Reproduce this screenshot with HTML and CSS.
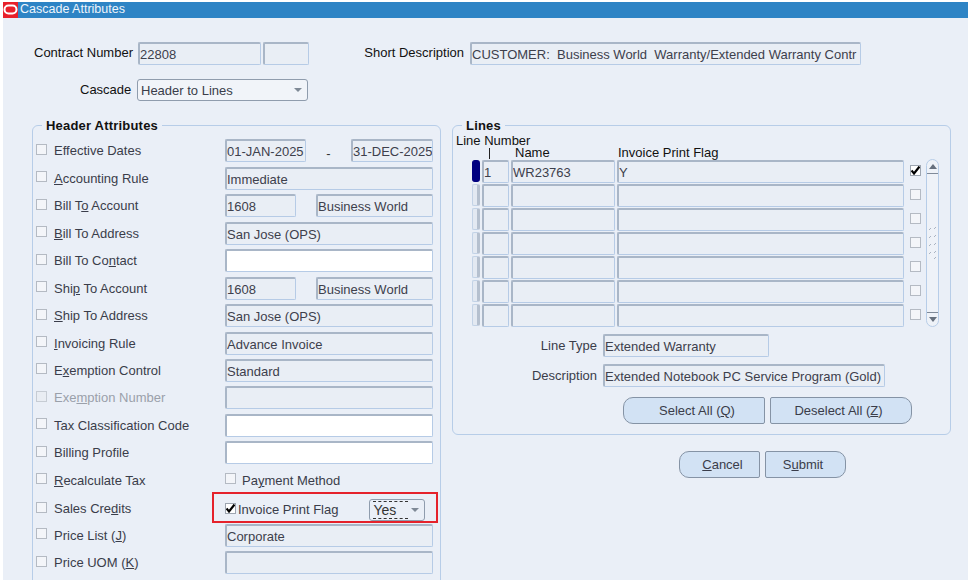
FILE: index.html
```html
<!DOCTYPE html>
<html lang="en">
<head>
<meta charset="utf-8">
<title>Cascade Attributes</title>
<link rel="stylesheet" href="styles.css">
</head>
<body>
<div class="window">
  <header class="titlebar">
    <span class="app-icon"><svg width="15" height="16" viewBox="0 0 15 16"><rect x="1.5" y="3.5" width="12" height="8" rx="4" fill="none" stroke="#fff" stroke-width="2"/></svg></span>
    <span class="title">Cascade Attributes</span>
  </header>
  <main class="content">
    <div class="top-row">
      <label class="top-label label-contract">Contract Number</label>
      <div class="field w-123">22808</div>
      <div class="field w-46"></div>
      <label class="top-label label-short">Short Description</label>
      <div class="field w-391">CUSTOMER:&nbsp; Business World&nbsp; Warranty/Extended Warranty Contr</div>
    </div>
    <div class="cascade-row">
      <label class="top-label label-cascade">Cascade</label>
      <div class="select w-171"><span>Header to Lines</span><i class="caret"></i></div>
    </div>
    <div class="panels">
      <fieldset class="group group-left">
        <legend>Header Attributes</legend>
        <div class="attr-row"><span class="cb"></span><span class="attr-label">Effective Dates</span><div class="pair"><div class="field w-81">01-JAN-2025</div><span class="dash">-</span><div class="field w-82">31-DEC-2025</div></div></div>
        <div class="attr-row"><span class="cb"></span><span class="attr-label"><u>A</u>ccounting Rule</span><div class="field">Immediate</div></div>
        <div class="attr-row"><span class="cb"></span><span class="attr-label">Bill T<u>o</u> Account</span><div class="pair"><div class="field w-71">1608</div><div class="field w-117">Business World</div></div></div>
        <div class="attr-row"><span class="cb"></span><span class="attr-label"><u>B</u>ill To Address</span><div class="field">San Jose (OPS)</div></div>
        <div class="attr-row"><span class="cb"></span><span class="attr-label">Bill To Co<u>n</u>tact</span><div class="field white"></div></div>
        <div class="attr-row"><span class="cb"></span><span class="attr-label">Shi<u>p</u> To Account</span><div class="pair"><div class="field w-71">1608</div><div class="field w-117">Business World</div></div></div>
        <div class="attr-row"><span class="cb"></span><span class="attr-label"><u>S</u>hip To Address</span><div class="field">San Jose (OPS)</div></div>
        <div class="attr-row"><span class="cb"></span><span class="attr-label"><u>I</u>nvoicing Rule</span><div class="field">Advance Invoice</div></div>
        <div class="attr-row"><span class="cb"></span><span class="attr-label">E<u>x</u>emption Control</span><div class="field">Standard</div></div>
        <div class="attr-row"><span class="cb disabled"></span><span class="attr-label muted">Exe<u>m</u>ption Number</span><div class="field"></div></div>
        <div class="attr-row"><span class="cb"></span><span class="attr-label">Tax Classification Code</span><div class="field white"></div></div>
        <div class="attr-row"><span class="cb"></span><span class="attr-label">Billing Profile</span><div class="field white"></div></div>
        <div class="attr-row"><span class="cb"></span><span class="attr-label"><u>R</u>ecalculate Tax</span><div class="inline-check"><span class="cb"></span><span class="attr-label">Pa<u>y</u>ment Method</span></div></div>
        <div class="attr-row"><span class="cb"></span><span class="attr-label">Sales Cre<u>d</u>its</span>
          <div class="highlight"><span class="cb checked"><svg width="11" height="11" viewBox="0 0 11 11"><path d="M1.5 5.5 L4 8.5 L9.5 1.5" fill="none" stroke="#000" stroke-width="2.2"/></svg></span><span class="flag-label">Invoice Print Flag</span><div class="select w-56"><span class="focus">Yes</span><i class="caret"></i></div></div>
        </div>
        <div class="attr-row"><span class="cb"></span><span class="attr-label">Price List (<u>J</u>)</span><div class="field">Corporate</div></div>
        <div class="attr-row"><span class="cb"></span><span class="attr-label">Price UOM (<u>K</u>)</span><div class="field"></div></div>
      </fieldset>
      <div class="right-col">
        <fieldset class="group group-right">
          <legend>Lines</legend>
          <div class="col-heads">
            <div class="head-number">Line Number<span class="tick"></span></div>
            <div class="head-name">Name</div>
            <div class="head-flag">Invoice Print Flag</div>
          </div>
          <div class="table">
            <div class="rows">
              <div class="line"><span class="sel current"></span><div class="field c-num">1</div><div class="field c-name">WR23763</div><div class="field c-flag">Y</div><span class="cb line-cb checked"><svg width="11" height="11" viewBox="0 0 11 11"><path d="M1.5 5.5 L4 8.5 L9.5 1.5" fill="none" stroke="#000" stroke-width="2.2"/></svg></span></div>
              <div class="line"><span class="sel"></span><div class="field c-num"></div><div class="field c-name"></div><div class="field c-flag"></div><span class="cb line-cb"></span></div>
              <div class="line"><span class="sel"></span><div class="field c-num"></div><div class="field c-name"></div><div class="field c-flag"></div><span class="cb line-cb"></span></div>
              <div class="line"><span class="sel"></span><div class="field c-num"></div><div class="field c-name"></div><div class="field c-flag"></div><span class="cb line-cb"></span></div>
              <div class="line"><span class="sel"></span><div class="field c-num"></div><div class="field c-name"></div><div class="field c-flag"></div><span class="cb line-cb"></span></div>
              <div class="line"><span class="sel"></span><div class="field c-num"></div><div class="field c-name"></div><div class="field c-flag"></div><span class="cb line-cb"></span></div>
              <div class="line"><span class="sel"></span><div class="field c-num"></div><div class="field c-name"></div><div class="field c-flag"></div><span class="cb line-cb"></span></div>
            </div>
            <div class="scrollbar">
              <div class="sb-end sb-up"><i class="arrow-up"></i></div>
              <div class="sb-track"><svg width="9" height="34" viewBox="0 0 9 34"><path d="M1 4l2-2M6 3l2-2M1 12l2-2M6 11l2-2M1 20l2-2M6 19l2-2M1 28l2-2M6 27l2-2M6 33l2-2" stroke="#a9b3c2" stroke-width="1" fill="none"/></svg></div>
              <div class="sb-end sb-down"><i class="arrow-down"></i></div>
            </div>
          </div>
          <div class="detail-row first"><label class="detail-label">Line Type</label><div class="field w-166">Extended Warranty</div></div>
          <div class="detail-row"><label class="detail-label">Description</label><div class="field w-282">Extended Notebook PC Service Program (Gold)</div></div>
          <div class="line-buttons">
            <button class="btn w-142" type="button">Select All (<u>Q</u>)</button>
            <button class="btn w-142" type="button">Deselect All (<u>Z</u>)</button>
          </div>
        </fieldset>
        <div class="main-buttons">
          <button class="btn w-81" type="button"><u>C</u>ancel</button>
          <button class="btn w-81" type="button">S<u>u</u>bmit</button>
        </div>
      </div>
    </div>
  </main>
</div>
</body>
</html>
```
FILE: styles.css
```css
* { box-sizing: border-box; }
html, body { margin: 0; height: 100%; overflow: hidden; background: #fff; }
body { font-family: "Liberation Sans", Arial, sans-serif; font-size: 13px; color: #3a3d4a; }
.window { margin: 2px 0 0 3px; height: 578px; background: #eaeff7; display: flex; flex-direction: column; overflow: hidden; }
.titlebar { height: 16px; background: #2e84c5; display: flex; align-items: center; flex: none; }
.app-icon { width: 15px; height: 16px; background: #e8202a; display: block; flex: none; }
.app-icon svg { display: block; }
.title { color: #eef5fb; font-size: 12.5px; margin: -2px 0 0 2px; line-height: 16px; }
.content { padding: 24px 0 0 29px; }
.top-row { display: flex; align-items: flex-start; height: 37px; }
.cascade-row { display: flex; height: 39px; }
.top-label { color: #111; height: 21px; line-height: 21px; white-space: nowrap; }
.label-contract { width: 106px; padding-left: 2px; }
.label-short { width: 106px; margin-left: 55px; text-align: right; padding-right: 6px; }
.label-cascade { width: 105px; padding-left: 48px; }
.field { height: 23px; line-height: 21px; padding: 0; background: #e9eef5; border: 1px solid #b6cbe6; border-top: 2px solid #a9b6c7; border-left: 2px solid #a9b6c7; border-radius: 2px; white-space: nowrap; overflow: hidden; color: #3d404c; flex: none; }
.white { background: #fff; }
.w-123 { width: 123px; margin-right: 2px; }
.w-46 { width: 46px; }
.w-391 { width: 391px; }
.w-81 { width: 81px; }
.w-82 { width: 82px; }
.w-71 { width: 71px; }
.w-117 { width: 117px; }
.w-166 { width: 166px; }
.w-282 { width: 282px; }
.select { height: 22px; border: 1px solid #8f9cad; border-radius: 3px; background: #f1f4f9; display: flex; align-items: center; justify-content: space-between; padding: 0 5px 0 3px; flex: none; }
.w-171 { width: 171px; }
.w-56 { width: 56px; margin-left: 31px; background: #eaeff7; }
.caret { width: 0; height: 0; border-left: 4px solid transparent; border-right: 4px solid transparent; border-top: 4px solid #7f8996; display: block; }
.focus { border-top: 1px dashed #333; border-bottom: 1px dashed #333; line-height: 16px; padding-right: 12px; font-size: 14px; color: #333; }
.panels { display: flex; gap: 11px; align-items: flex-start; }
.group { margin: 0; min-width: 0; border: 1px solid #b7cde8; border-radius: 6px; }
.group legend { font-weight: bold; color: #111; padding: 0 4px; font-size: 13px; letter-spacing: .2px; line-height: 15px; }
.group-left { width: 409px; height: 486px; padding: 4px 7px 0 3px; flex: none; }
.group-left legend { margin-left: 6px; }
.right-col { width: 499px; flex: none; }
.group-right { width: 499px; height: 317px; padding: 0 0 0 3px; }
.group-right legend { margin-left: 6px; }
.attr-row { display: grid; grid-template-columns: 18px 171px 208px; align-items: center; height: 27.47px; }
.attr-label { white-space: nowrap; color: #3a3d4a; }
.muted { color: #9aa0aa; }
.cb { width: 11px; height: 11px; display: block; border: 1px solid #b4bac3; background: #f3f5f9; margin-top: -3px; overflow: hidden; }
.cb.checked { background: #fff; border-color: #9da5b0; }
.cb svg { display: block; margin: -1px; }
.cb.disabled { background: #e9edf3; border-color: #c6ccd4; }
.pair { display: flex; justify-content: space-between; align-items: center; }
.dash { color: #333; margin-top: 6px; }
.inline-check { display: flex; align-items: center; gap: 6px; }
.highlight { display: flex; align-items: center; height: 31px; margin: -2px -5px 0 -13px; padding: 4px 0 0 11px; border: 2px solid #e5222b; position: relative; z-index: 1; }
.highlight .cb { margin-top: -3px; }
.flag-label { margin-left: 2px; color: #3a3d4a; white-space: nowrap; }
.col-heads { height: 26px; color: #111; display: grid; grid-template-columns: 59px 103px 1fr; align-items: end; }
.head-number { white-space: nowrap; width: 59px; height: 26px; line-height: 15px; }
.tick { display: block; width: 1px; height: 11px; background: #222; margin: 0 0 0 33px; }
.head-name, .head-flag { line-height: 14px; margin-bottom: -1px; }
.table { display: flex; margin-left: 16px; }
.rows { display: flex; flex-direction: column; }
.line { display: flex; align-items: center; height: 24px; }
.sel { width: 8px; height: 22px; background: #e3e9f2; border: 1px solid #c2d2e6; border-right: 3px solid #b5c0cf; border-radius: 2px; margin-right: 2px; }
.sel.current { background: #000080; border-color: #000080; border-radius: 3px; }
.c-num { width: 27px; margin-right: 2px; }
.c-name { width: 104px; margin-right: 2px; }
.c-flag { width: 287px; }
.line-cb { margin: -1px 0 0 6px; }
.scrollbar { width: 13px; height: 168px; margin-left: 5px; border: 1px solid #b7cde8; border-radius: 7px; display: flex; flex-direction: column; background: #eef2f8; }
.sb-end { height: 14px; display: flex; align-items: center; justify-content: center; flex: none; }
.sb-up { border-bottom: 1px solid #7f8a99; }
.sb-down { border-top: 1px solid #7f8a99; }
.sb-track { flex: 1; display: flex; align-items: center; justify-content: center; }
.arrow-up { border-left: 4px solid transparent; border-right: 4px solid transparent; border-bottom: 5px solid #66707e; }
.arrow-down { border-left: 4px solid transparent; border-right: 4px solid transparent; border-top: 5px solid #66707e; }
.detail-row { display: flex; align-items: center; height: 30px; }
.detail-row.first { margin-top: 3px; }
.detail-label { width: 147px; text-align: right; padding-right: 6px; color: #3a3d4a; white-space: nowrap; flex: none; }
.line-buttons { display: flex; gap: 5px; margin: 7px 0 0 167px; }
.btn { height: 27px; font: inherit; color: #3a3d4a; background: #d2e2f4; border: 1px solid #8593a5; padding: 0; }
.btn:first-child { border-radius: 10px 2px 2px 10px; padding-left: 6px; }
.btn:last-child { border-radius: 2px 10px 10px 2px; padding-right: 5px; }
.w-142 { width: 142px; }
.main-buttons { display: flex; gap: 5px; margin: 16px 0 0 227px; }
```
